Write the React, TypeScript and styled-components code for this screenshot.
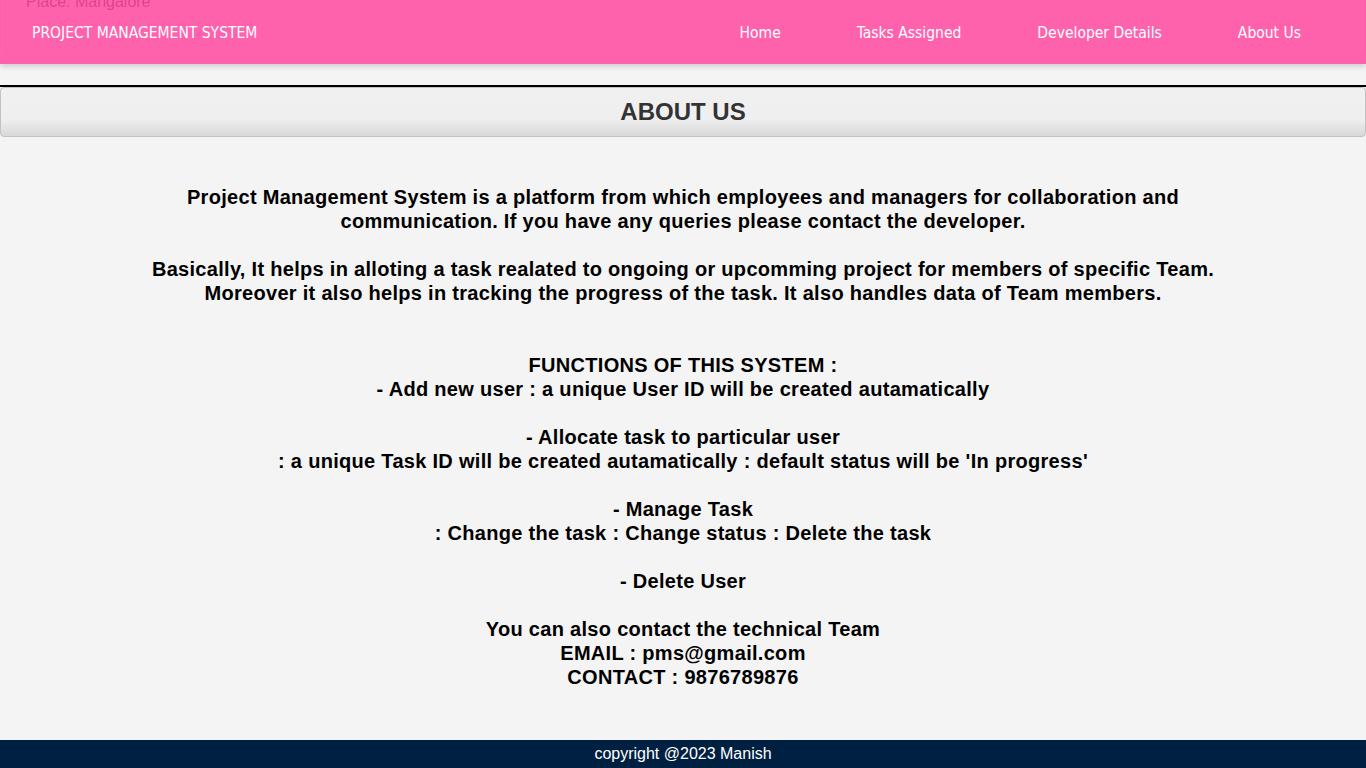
import React from "react";
import styled, { createGlobalStyle } from "styled-components";

const Global = createGlobalStyle`
  html, body { margin: 0; padding: 0; }
  body {
    background: #f4f4f4;
    font-family: "Liberation Sans", Arial, sans-serif;
  }
`;

const Page = styled.div`
  min-height: 100vh;
  display: flex;
  flex-direction: column;
`;

const NavBar = styled.header`
  position: relative;
  height: 64px;
  background: #ff62ad;
  box-shadow: 0 2px 6px rgba(0, 0, 0, 0.18);
  overflow: hidden;
`;

const NavInner = styled.div`
  height: 58px;
  margin: 0 0 0 5px;
  border-radius: 0 0 8px 8px;
  border: 1px solid rgba(200, 40, 120, 0.06);
  border-top: none;
  display: flex;
  align-items: center;
  justify-content: space-between;
  padding: 8px 26px 0 26px;
  box-sizing: border-box;
`;

const Place = styled.span`
  position: absolute;
  left: 26px;
  top: -7px;
  font-family: "Liberation Sans", Arial, sans-serif;
  font-size: 16px;
  color: rgba(190, 40, 120, 0.55);
`;

const Brand = styled.span`
  font-family: "DejaVu Sans Condensed", "DejaVu Sans", sans-serif;
  font-size: 15.5px;
  color: #ffffff;
`;

const Links = styled.nav`
  display: flex;
`;

const NavLink = styled.a`
  font-family: "DejaVu Sans Condensed", "DejaVu Sans", sans-serif;
  font-size: 15.5px;
  color: #ffffff;
  text-decoration: none;
  padding: 0 38px;
`;

const Rule = styled.div`
  margin-top: 21px;
  height: 2px;
  background: #000;
`;

const TitleBox = styled.div`
  height: 48px;
  border: 1px solid #c2c2c2;
  border-radius: 4px;
  background: linear-gradient(to bottom, #f0f0f0 0%, #efefef 65%, #d8d8d8 100%);
  display: flex;
  align-items: center;
  justify-content: center;
`;

const Title = styled.h2`
  margin: 0;
  font-family: "Liberation Sans", Arial, sans-serif;
  font-weight: bold;
  font-size: 24px;
  color: #333;
`;

const Content = styled.main`
  max-width: 1100px;
  margin: 0 auto;
  padding-top: 48px;
  text-align: center;
  font-family: "Liberation Sans", Arial, sans-serif;
  font-weight: bold;
  font-size: 20px;
  line-height: 24px;
  letter-spacing: 0.3px;
  color: #000;
`;

const Para = styled.p<{ $gap?: number }>`
  margin: 0 0 ${(p) => p.$gap ?? 24}px 0;
`;

const Footer = styled.footer`
  margin-top: auto;
  height: 28px;
  background: #002041;
  color: #ffffff;
  font-family: "Liberation Sans", Arial, sans-serif;
  font-size: 16px;
  display: flex;
  align-items: center;
  justify-content: center;
`;

export default function App() {
  return (
    <Page>
      <Global />
      <NavBar>
        <Place>Place: Mangalore</Place>
        <NavInner>
          <Brand>PROJECT MANAGEMENT SYSTEM</Brand>
          <Links>
            <NavLink href="#">Home</NavLink>
            <NavLink href="#">Tasks Assigned</NavLink>
            <NavLink href="#">Developer Details</NavLink>
            <NavLink href="#">About Us</NavLink>
          </Links>
        </NavInner>
      </NavBar>
      <Rule />
      <TitleBox>
        <Title>ABOUT US</Title>
      </TitleBox>
      <Content>
        <Para>
          Project Management System is a platform from which employees and managers for collaboration and communication. If you have any queries please contact the developer.
        </Para>
        <Para $gap={48}>
          Basically, It helps in alloting a task realated to ongoing or upcomming project for members of specific Team. Moreover it also helps in tracking the progress of the task. It also handles data of Team members.
        </Para>
        <Para>
          FUNCTIONS OF THIS SYSTEM :<br />- Add new user : a unique User ID will be created autamatically
        </Para>
        <Para>
          - Allocate task to particular user<br />: a unique Task ID will be created autamatically : default status will be 'In progress'
        </Para>
        <Para>
          - Manage Task<br />: Change the task : Change status : Delete the task
        </Para>
        <Para>- Delete User</Para>
        <Para>
          You can also contact the technical Team<br />EMAIL : pms@gmail.com<br />CONTACT : 9876789876
        </Para>
      </Content>
      <Footer>copyright @2023 Manish</Footer>
    </Page>
  );
}
